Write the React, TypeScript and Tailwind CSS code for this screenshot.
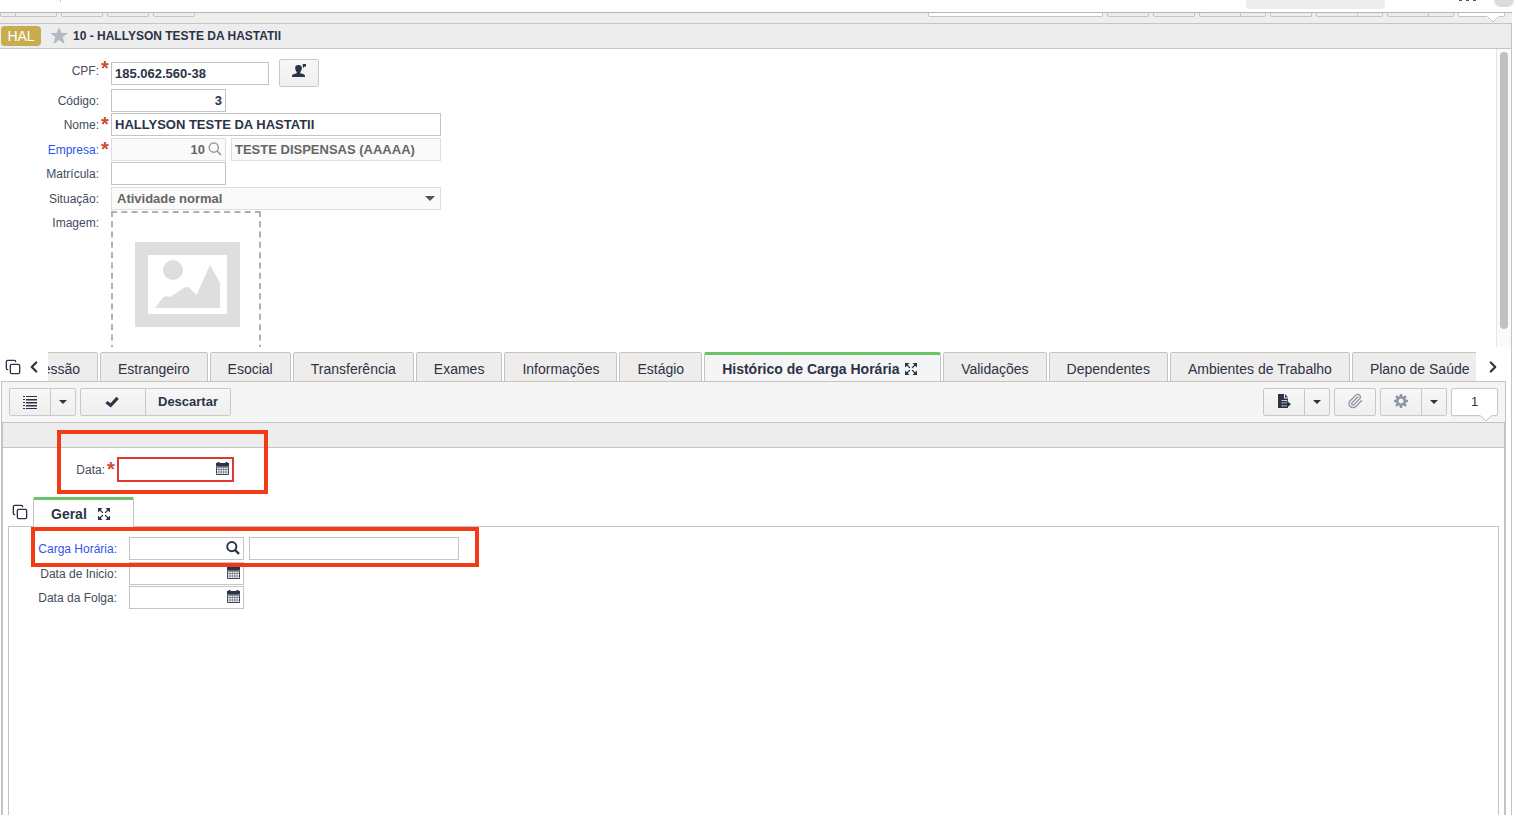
import React from "react";
import { Copy, Paperclip, ChevronLeft, ChevronRight } from "lucide-react";
import clsx from "clsx";

const CaretIcon = ({ className = "w-2 h-1" }: { className?: string }) => (
  <svg viewBox="0 0 8 4" className={clsx("shrink-0", className)} fill="currentColor" aria-hidden="true">
    <path d="M0 0h8L4 4z" />
  </svg>
);

const StarIcon = () => (
  <svg viewBox="0 0 18 17" className="w-[18px] h-[17px]" fill="currentColor" aria-hidden="true">
    <path d="M9 0l2.4 6H18l-5.200 4.100L14.600 17 9 13l-5.600 4 1.800-6.900L0 6h6.600z" />
  </svg>
);

const CheckIcon = () => (
  <svg viewBox="0 0 14 12" className="mr-0.5 w-3.5 h-3" fill="currentColor" aria-hidden="true">
    <path d="M11.400 .8L13.800 3 5.800 11.400 .4 7.200 2.500 4.900l3.100 2.300z" />
  </svg>
);

const ListIcon = () => (
  <svg viewBox="0 0 14 13" className="w-3.5 h-[13px]" fill="currentColor" aria-hidden="true">
    {[0, 3, 6, 9, 12].map((y) => (
      <path key={y} d={`M0 ${y}h2v1H0zM3 ${y}h11v1H3z`} />
    ))}
    <path d="M3 3h11v1.500H3zM3 6h11v1.500H3zM3 9h11v1.500H3z" />
  </svg>
);

const ExpandIcon = () => (
  <svg viewBox="0 0 12 12" className="w-3 h-3 shrink-0" aria-hidden="true">
    <path d="M0 0h4.500L0 4.500zM12 0v4.500L7.500 0zM0 12V7.500L4.500 12zM12 12H7.500L12 7.500z" fill="currentColor" />
    <path d="M1.500 1.500l3.400 3.400M10.500 1.500L7.100 4.900M1.500 10.500l3.400-3.400M10.500 10.500L7.100 7.100" stroke="currentColor" strokeWidth="1.300" />
  </svg>
);

const SearchIcon = ({ thin = false }: { thin?: boolean }) => (
  <svg viewBox="0 0 14 14" className="w-3.5 h-3.5" fill="none" stroke="currentColor" aria-hidden="true">
    <circle cx="5.800" cy="5.600" r="4.600" strokeWidth={thin ? 1.4 : 1.9} />
    <path d="M9 9l4 3.800" strokeWidth={thin ? 1.7 : 2.4} />
  </svg>
);

const CalendarIcon = () => (
  <svg viewBox="0 0 13 13" className="w-[13px] h-[13px]" aria-hidden="true">
    <path d="M0 1h1.500V0h2v1h6V0h2v1H13v3.600H0z" fill="currentColor" />
    <path d="M.5 5h12v7.500H.5z" fill="#fff" stroke="currentColor" strokeWidth="0.9" />
    <path d="M3 5v7.500M5.300 5v7.500M7.700 5v7.500M10 5v7.500M.5 7.500h12M.5 10h12" stroke="currentColor" strokeWidth="0.5" />
  </svg>
);

const UserIcon = () => (
  <svg viewBox="0 0 14 14" className="w-3.5 h-3.5" fill="currentColor" aria-hidden="true">
    <path d="M6.500 1C4 1 2.900 2.500 3.200 4.500c.2 1.700.8 2.700 1.500 3.400v1.400L1.200 10.300C.4 10.600 0 11.200 0 12v1h13v-1c0-.8-.4-1.400-1.200-1.700L8.300 9.300V7.900c.7-.7 1.300-1.700 1.500-3.400C10.100 2.500 9 1 6.500 1z" />
    <path d="M10.700 0H14v2.600h-1.400l-1.500 1.600V2.600h-.4z" />
  </svg>
);

const ExportIcon = () => (
  <svg viewBox="0 0 13 14" className="w-[13px] h-3.5" aria-hidden="true">
    <path d="M0 0h6v4.500h4V14H0z" fill="currentColor" />
    <path d="M7 0l3 3.500H7z" fill="currentColor" />
    <path d="M3.500 6.500H9v1.200M3.500 9H9M3.500 11.800H9" stroke="#f3f3f3" strokeWidth="0.8" fill="none" />
    <path d="M5 9.400h4.500V7.300l3.500 3-3.500 3v-2H5z" fill="currentColor" />
  </svg>
);

const GearIcon = () => (
  <svg viewBox="-7 -7 14 14" className="w-3.5 h-3.5" aria-hidden="true">
    <circle r="3.800" fill="none" stroke="currentColor" strokeWidth="2.600" />
    {[0, 45, 90, 135, 180, 225, 270, 315].map((a) => (
      <path key={a} d="M-1.400-4.600L-1.100-7H1.100L1.400-4.600z" fill="currentColor" transform={`rotate(${a})`} />
    ))}
  </svg>
);

const PictureIcon = () => (
  <svg viewBox="0 0 105 85" className="w-[105px] h-[85px]" fill="#dedede" aria-hidden="true">
    <path fillRule="evenodd" d="M0 0h105v85H0zM13 13v59h79V13z" />
    <circle cx="38" cy="28" r="10" />
    <path d="M20 66l7-9c2-3 4-3 6-2.500 2 .6 3 .5 5-1.500l8-5c4-3.500 7-4 10-.5l5.500 5.500L75 23l10 18v25z" />
  </svg>
);

interface RowProps {
  id: string;
  label: string;
  required?: boolean;
  link?: boolean;
  labelWidth?: string;
  children?: React.ReactNode;
}

const inputBase = "block h-[23px] border border-[#c4c4c4] bg-white px-[3px] text-[13px] font-bold text-[#2b3347] outline-none";
const disabledBox = "border-[#dedede] bg-[#fafafa]";

function Required({ show }: { show?: boolean }) {
  return (
    <span className="flex h-5 w-3 shrink-0 justify-center text-xl leading-[18px] font-bold text-[#cb4a32]" aria-hidden="true">
      {show ? "*" : ""}
    </span>
  );
}

function Row({ id, label, required, link, labelWidth = "w-[99px]", children }: RowProps) {
  return (
    <div className="flex h-[23px] items-center">
      <label htmlFor={id} className={clsx("shrink-0 text-right text-xs", labelWidth, link ? "text-[#2f55ee]" : "text-[#434b5c]")}>
        {label}
      </label>
      <Required show={required} />
      {children}
    </div>
  );
}

interface IconInputProps {
  id: string;
  value?: string;
  disabled?: boolean;
  invalid?: boolean;
  action: string;
  icon: React.ReactNode;
}

function IconInput({ id, value, disabled, invalid, action, icon }: IconInputProps) {
  return (
    <div
      className={clsx(
        "flex items-center justify-end pr-[3px]",
        invalid ? "h-[25px] w-[117px] border-2 border-[#dc3a2e]" : "h-[23px] w-[115px] border",
        !invalid && (disabled ? disabledBox : "border-[#c4c4c4]"),
        disabled ? "text-[#999]" : "text-[#2b3347]"
      )}
    >
      <input
        id={id}
        defaultValue={value}
        disabled={disabled}
        className="w-0 min-w-0 flex-1 bg-transparent pr-[3px] text-right text-[13px] font-bold text-[#666] outline-none"
      />
      <button type="button" aria-label={action} disabled={disabled} className="shrink-0 pb-0.5">
        {icon}
      </button>
    </div>
  );
}

const btn = "flex h-7 items-center justify-center rounded-xs border border-[#c8c8c8] bg-linear-to-b from-[#f7f7f7] to-[#efefef] text-[#2b3347]";

// Bottom edge of the main toolbar that stays visible under the top bar
const stripLeft = [[14, 41], [40], [40], [40]];
const stripRight = [[40], [40], [40, 25], [40], [40, 25], [40, 25]];

function StripGroup({ cells }: { cells: number[] }) {
  return (
    <div className="flex h-1 rounded-b-xs border border-t-0 border-[#c4c4c4]">
      {cells.map((w, i) => (
        <span key={i} className={clsx(i > 0 && "border-l border-[#c4c4c4]")} style={{ width: w }} />
      ))}
    </div>
  );
}

function CountPointer() {
  return (
    <svg viewBox="0 0 12 7" className="absolute right-[5px] -bottom-[7px] w-3 h-[7px]" aria-hidden="true">
      <path d="M0 0h12v.5L6 6.500 0 .5z" fill="#fff" />
      <path d="M.5.5L6 6 11.500.5" fill="none" stroke="#c4c4c4" />
    </svg>
  );
}

const tabs = [
  "Estrangeiro",
  "Esocial",
  "Transferência",
  "Exames",
  "Informações",
  "Estágio",
  "Histórico de Carga Horária",
  "Validações",
  "Dependentes",
  "Ambientes de Trabalho",
  "Plano de Saúde"
];

const ACTIVE_TAB = "Histórico de Carga Horária";

function TopStrip() {
  return (
    <header>
      <div className="flex h-3 items-start bg-white">
        <span className="ml-[60px] h-0.5 w-px bg-[#c4c4c4]" />
        <span className="ml-auto h-[9px] w-[139px] rounded-b-sm bg-[#efedeb]" />
        <span className="ml-[74px] flex gap-1 pr-[18px]">
          <i className="h-px w-[3px] bg-[#555]" />
          <i className="h-px w-[3px] bg-[#555]" />
          <i className="h-px w-[3px] bg-[#555]" />
        </span>
        <span className="h-[7px] w-5 rounded-b-full bg-[#dcdcdc]" />
      </div>
      <div className="mr-0.5 flex h-[11px] items-start gap-1 border-t border-[#b8b6b4] bg-[#f0eeec]">
        {stripLeft.map((cells, i) => (
          <StripGroup key={i} cells={cells} />
        ))}
        <div className="ml-auto h-1 w-[175px] rounded-b-xs border border-t-0 border-[#c4c4c4] bg-white" />
        {stripRight.map((cells, i) => (
          <StripGroup key={i} cells={cells} />
        ))}
        <div className="relative mr-[7px] h-1 w-[47px] rounded-b-xs border border-t-0 border-[#c4c4c4] bg-white">
          <CountPointer />
        </div>
      </div>
    </header>
  );
}

function EmployeeForm() {
  return (
    <div className="flex h-[298px] overflow-hidden">
      <form className="flex-1 pt-2.5">
        <div className="mb-0.5 flex h-7 items-start">
          <label htmlFor="cpf" className="w-[99px] pt-1 text-right text-xs text-[#434b5c]">CPF:</label>
          <Required show />
          <input id="cpf" defaultValue="185.062.560-38" className={clsx(inputBase, "mt-[3px] w-[158px]")} />
          <button type="button" aria-label="Consultar pessoa" className={clsx(btn, "ml-2.5 w-10 pb-1")}>
            <UserIcon />
          </button>
        </div>

        <div className="flex flex-col gap-0.5">
          <div className="flex flex-col gap-px">
            <Row id="codigo" label="Código:">
              <input id="codigo" defaultValue="3" className={clsx(inputBase, "w-[115px] text-right")} />
            </Row>
            <Row id="nome" label="Nome:" required>
              <input id="nome" defaultValue="HALLYSON TESTE DA HASTATII" className={clsx(inputBase, "w-[330px]")} />
            </Row>
          </div>
          <div className="flex flex-col gap-px">
            <Row id="empresa" label="Empresa:" required link>
              <IconInput id="empresa" value="10" disabled action="Pesquisar empresa" icon={<SearchIcon thin />} />
              <input
                aria-label="Nome da empresa"
                disabled
                defaultValue="TESTE DISPENSAS (AAAAA)"
                className="ml-[5px] h-[23px] w-[210px] border border-[#dedede] bg-[#fafafa] px-[3px] text-[13px] font-bold text-[#666]"
              />
            </Row>
            <Row id="matricula" label="Matrícula:">
              <input id="matricula" className={clsx(inputBase, "w-[115px]")} />
            </Row>
          </div>
          <div className="flex flex-col gap-px">
            <Row id="situacao" label="Situação:">
              <div className="relative w-[330px]">
                <select
                  id="situacao"
                  disabled
                  className="block h-[23px] w-full appearance-none border border-[#dedede] bg-[#fafafa] px-[5px] text-[13px] font-bold text-[#666] opacity-100"
                >
                  <option>Atividade normal</option>
                </select>
                <CaretIcon className="pointer-events-none absolute top-[9px] right-1.5 h-[5px] w-2.5 text-[#555]" />
              </div>
            </Row>
            <div className="flex items-start">
              <label htmlFor="imagem" className="w-[99px] pt-1 text-right text-xs text-[#434b5c]">Imagem:</label>
              <button
                id="imagem"
                type="button"
                aria-label="Selecionar imagem"
                className="ml-3 flex h-[150px] w-[150px] items-center justify-center border-2 border-dashed border-[#b0b0b0] pb-1 pl-0.5"
              >
                <PictureIcon />
              </button>
            </div>
          </div>
        </div>
      </form>
      <div className="w-[15px] border-l border-[#e4e4e4] bg-[#fafafa] px-[3px] pt-[3px]">
        <div className="h-[277px] w-2 rounded-full bg-[#c1c1c1]" />
      </div>
    </div>
  );
}

function TabBar() {
  return (
    <nav className="mt-[5px] flex h-[29px] items-center text-[#2b3347]">
      <button type="button" aria-label="Duplicar aba" className="ml-[5px]">
        <Copy className="w-4 h-4" strokeWidth={2} />
      </button>
      <button type="button" aria-label="Abas anteriores" className="flex w-[27px] justify-center pr-0.5">
        <ChevronLeft className="w-[18px] h-[18px]" strokeWidth={3} />
      </button>
      <div className="-mb-px flex h-[30px] min-w-0 flex-1 gap-0.5 overflow-hidden text-sm" role="tablist">
        <button
          type="button"
          role="tab"
          className="flex w-[50px] shrink-0 items-center justify-end overflow-hidden rounded-tr-xs border border-l-0 border-[#c4c4c4] bg-[#efedeb] pt-1 pr-[17px]"
        >
          Cessão
        </button>
        {tabs.map((tab) =>
          tab === ACTIVE_TAB ? (
            <button
              key={tab}
              type="button"
              role="tab"
              aria-selected="true"
              className="flex w-[237px] shrink-0 items-center gap-[5px] rounded-t-xs border-x border-t-3 border-x-[#c4c4c4] border-t-[#6cc268] bg-[#f5f5f5] pl-[17px] font-bold whitespace-nowrap"
            >
              {tab}
              <ExpandIcon />
            </button>
          ) : (
            <button
              key={tab}
              type="button"
              role="tab"
              className="shrink-0 rounded-t-xs border border-[#c4c4c4] bg-[#efedeb] px-[17px] pt-1 whitespace-nowrap"
            >
              {tab}
            </button>
          )
        )}
      </div>
      <button type="button" aria-label="Próximas abas" className="flex w-[35px] justify-center pr-0.5">
        <ChevronRight className="w-[18px] h-[18px]" strokeWidth={3} />
      </button>
    </nav>
  );
}

function Toolbar() {
  return (
    <div className="flex h-10 items-center gap-1 bg-[#f5f5f5] px-[7px] text-[13px]">
      <div className="flex">
        <button type="button" aria-label="Lista" className={clsx(btn, "w-[42px] rounded-r-none")}>
          <ListIcon />
        </button>
        <button type="button" aria-label="Opções da lista" className={clsx(btn, "-ml-px w-[26px] rounded-l-none")}>
          <CaretIcon />
        </button>
      </div>
      <div className="flex">
        <button type="button" aria-label="Salvar" className={clsx(btn, "w-[66px] rounded-r-none")}>
          <CheckIcon />
        </button>
        <button type="button" className={clsx(btn, "-ml-px w-[86px] rounded-l-none font-bold")}>
          Descartar
        </button>
      </div>
      <div className="ml-auto flex">
        <button type="button" aria-label="Exportar" className={clsx(btn, "w-[42px] rounded-r-none pb-0.5")}>
          <ExportIcon />
        </button>
        <button type="button" aria-label="Opções de exportação" className={clsx(btn, "-ml-px w-[26px] rounded-l-none")}>
          <CaretIcon />
        </button>
      </div>
      <button type="button" aria-label="Anexos" className={clsx(btn, "w-[42px] pb-0.5")}>
        <Paperclip className="w-4 h-4 text-[#8d94a3]" strokeWidth={2} />
      </button>
      <div className="flex">
        <button type="button" aria-label="Configurações" className={clsx(btn, "w-[42px] rounded-r-none pb-0.5")}>
          <span className="text-[#8d94a3]"><GearIcon /></span>
        </button>
        <button type="button" aria-label="Mais configurações" className={clsx(btn, "-ml-px w-[26px] rounded-l-none")}>
          <CaretIcon />
        </button>
      </div>
      <button type="button" className="relative h-7 w-[47px] rounded-xs border border-[#c8c8c8] bg-white text-[#2b3347] shadow-xs">
        1
        <CountPointer />
      </button>
    </div>
  );
}

function WorkloadPanel() {
  return (
    <div className="relative flex flex-1 flex-col border-x border-t border-[#c4c4c4]">
      <div className="h-[25px] border-b border-[#c4c4c4] bg-[#ededed]" />
      <div className="mt-[9px] flex h-[25px] items-center">
        <label htmlFor="data" className="w-[102px] text-right text-xs text-[#434b5c]">Data:</label>
        <Required show />
        <IconInput id="data" invalid action="Abrir calendário" icon={<CalendarIcon />} />
      </div>

      <div className="mt-[15px] flex h-[29px] items-start text-[#2b3347]">
        <button type="button" aria-label="Duplicar aba" className="ml-[9px] flex h-[30px] w-[21px] items-center">
          <Copy className="w-4 h-4" strokeWidth={2} />
        </button>
        <button
          type="button"
          role="tab"
          aria-selected="true"
          className="z-10 flex h-[30px] w-[101px] items-center gap-[11px] rounded-t-xs border-x border-t-3 border-x-[#c4c4c4] border-t-[#6cc268] bg-white pl-[17px] text-sm font-bold"
        >
          Geral
          <ExpandIcon />
        </button>
      </div>

      <div className="mx-[5px] flex flex-1 flex-col gap-px border border-b-0 border-[#c4c4c4] pt-2.5">
        <div className="mb-px">
          <Row id="carga" label="Carga Horária:" link labelWidth="w-[108px]">
            <IconInput id="carga" action="Pesquisar carga horária" icon={<SearchIcon />} />
            <input aria-label="Descrição da carga horária" className={clsx(inputBase, "ml-[5px] w-[210px]")} />
          </Row>
        </div>
        <Row id="inicio" label="Data de Inicio:" labelWidth="w-[108px]">
          <IconInput id="inicio" action="Abrir calendário" icon={<CalendarIcon />} />
        </Row>
        <Row id="folga" label="Data da Folga:" labelWidth="w-[108px]">
          <IconInput id="folga" action="Abrir calendário" icon={<CalendarIcon />} />
        </Row>
      </div>

      {/* Highlights drawn over the fields that need attention */}
      <div className="pointer-events-none absolute top-[7px] left-[54px] h-16 w-[211px] border-4 border-[#f23b16]" />
      <div className="pointer-events-none absolute top-[104px] left-7 z-20 h-10 w-[448px] border-4 border-[#f23b16]" />
    </div>
  );
}

export default function App() {
  return (
    <div className="flex min-h-screen flex-col overflow-hidden bg-white font-['Liberation_Sans',Arial,sans-serif]">
      <TopStrip />
      <main className="mr-0.5 flex flex-1 flex-col border-t border-r border-[#c4c4c4]">
        <div className="flex h-[25px] items-center border-b border-[#c4c4c4] bg-[#ededed] pl-px">
          <span className="flex h-5 w-10 items-center justify-center rounded-sm bg-[#c8ad50] text-sm text-white">HAL</span>
          <span className="ml-[9px] pb-0.5 text-[#b5bac2]"><StarIcon /></span>
          <h1 className="ml-[5px] text-xs font-bold text-[#2b3347]">10 - HALLYSON TESTE DA HASTATII</h1>
        </div>
        <EmployeeForm />
        <TabBar />
        <section className="mr-[5px] ml-px flex flex-1 flex-col border-x border-t border-[#c4c4c4]">
          <Toolbar />
          <WorkloadPanel />
        </section>
      </main>
    </div>
  );
}
